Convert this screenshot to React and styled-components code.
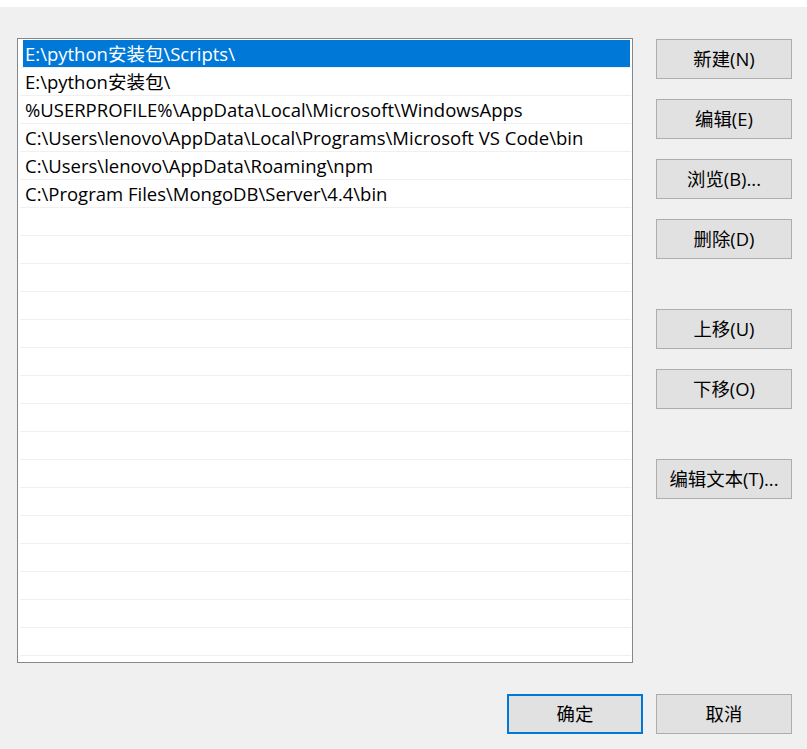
import React, { useState } from 'react'
import styled, { createGlobalStyle } from 'styled-components'

const GlobalStyle = createGlobalStyle`
  html, body {
    margin: 0;
    padding: 0;
    background: #f0f0f0;
  }
  body {
    font-family: "Open Sans", "Noto Sans CJK SC", sans-serif;
  }
`

const paths = [
  'E:\\python安装包\\Scripts\\',
  'E:\\python安装包\\',
  '%USERPROFILE%\\AppData\\Local\\Microsoft\\WindowsApps',
  'C:\\Users\\lenovo\\AppData\\Local\\Programs\\Microsoft VS Code\\bin',
  'C:\\Users\\lenovo\\AppData\\Roaming\\npm',
  'C:\\Program Files\\MongoDB\\Server\\4.4\\bin',
]

const ROWS = 22

const Window = styled.div`
  width: 807px;
  height: 749px;
  background: #f0f0f0;
  display: flex;
  flex-direction: column;
  overflow: hidden;
`

const TopStrip = styled.div`
  height: 7px;
  background: #ffffff;
`

const Body = styled.div`
  display: flex;
  padding: 31px 15px 0 17px;
  gap: 23px;
`

const ListBox = styled.div`
  width: 614px;
  height: 622px;
  border: 1px solid #828790;
  background: #ffffff;
  padding: 1px 1px 0 1px;
  box-sizing: content-box;
  display: flex;
  flex-direction: column;
  overflow: hidden;
`

const Row = styled.div`
  height: 27px;
  flex-shrink: 0;
  border-bottom: 1px solid #f0f0f0;
  margin-left: 1px;
  display: flex;
`

const RowText = styled.div`
  flex: 1;
  margin-left: 3px;
  margin-right: 1px;
  padding-left: 2px;
  font-size: 18.5px;
  line-height: 27px;
  height: 27px;
  overflow: hidden;
  white-space: nowrap;
  color: ${p => (p.$selected ? '#ffffff' : '#000000')};
  background: ${p => (p.$selected ? '#0078d7' : 'transparent')};
`

const ButtonColumn = styled.div`
  display: flex;
  flex-direction: column;
  padding-top: 1px;
`

const Button = styled.button`
  width: 136px;
  height: 40px;
  margin-top: ${p => p.$gap || 0}px;
  background: #e1e1e1;
  border: ${p => (p.$default ? '2px solid #0078d7' : '1px solid #adadad')};
  border-radius: 0;
  padding: 0 0 3px 0;
  font-family: "Open Sans", "Noto Sans CJK SC", sans-serif;
  font-size: 18.4px;
  color: #000000;
  cursor: default;
`

const Footer = styled.div`
  display: flex;
  justify-content: flex-end;
  gap: 13px;
  padding: 31px 15px 0 0;
`

export default function App() {
  const [selected, setSelected] = useState(0)
  const rows = Array.from({ length: ROWS }, (_, i) => paths[i] || '')

  return (
    <Window>
      <GlobalStyle />
      <TopStrip />
      <Body>
        <ListBox>
          {rows.map((p, i) => (
            <Row key={i} onClick={() => p && setSelected(i)}>
              <RowText $selected={i === selected}>{p}</RowText>
            </Row>
          ))}
        </ListBox>
        <ButtonColumn>
          <Button>新建(N)</Button>
          <Button $gap={20}>编辑(E)</Button>
          <Button $gap={20}>浏览(B)...</Button>
          <Button $gap={20}>删除(D)</Button>
          <Button $gap={50}>上移(U)</Button>
          <Button $gap={20}>下移(O)</Button>
          <Button $gap={50}>编辑文本(T)...</Button>
        </ButtonColumn>
      </Body>
      <Footer>
        <Button $default>确定</Button>
        <Button>取消</Button>
      </Footer>
    </Window>
  )
}
